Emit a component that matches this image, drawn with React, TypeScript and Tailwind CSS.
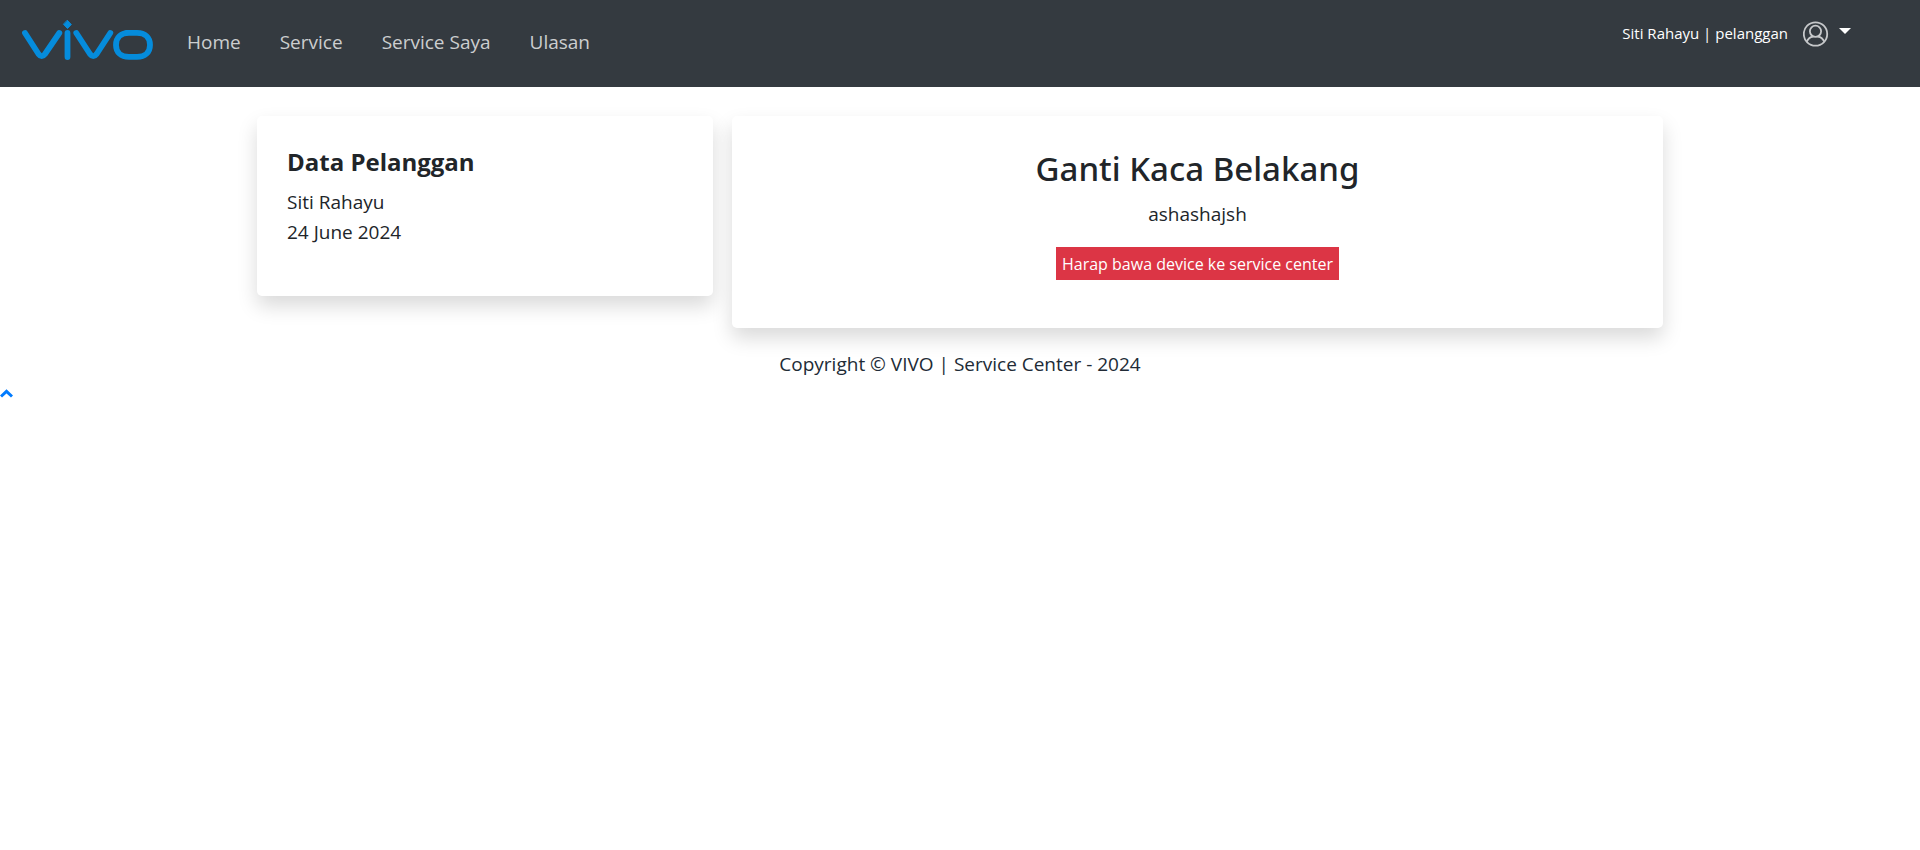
import React from "react";

const links = ["Home", "Service", "Service Saya", "Ulasan"];

function Logo() {
  return (
    <svg
      className="h-[42px] w-[132px]"
      viewBox="0 0 132 42"
      fill="none"
      stroke="#058cdc"
      strokeLinecap="round"
      strokeLinejoin="round"
      aria-label="vivo"
      role="img"
    >
      <g strokeWidth="5.8">
        <path d="M3 14 L16.500 35 Q19.700 39.400 23 35 L37.300 14" />
        <path d="M45.500 14 V38" />
        <path d="M54.300 14 L68 35 Q71.300 39.400 74.600 35 L88.300 14" />
        <path d="M104 13.900 H115 C123 13.900 128 18.500 128 25.900 C128 33.300 123 37.900 115 37.900 H107 C99 37.900 94 33.300 94 25.900 C94 18.500 99 13.900 107 13.900 Z" />
      </g>
      <path d="M45.500 1.500 L49.300 5.500 L45.500 9.500 L41.700 5.500 Z" fill="#058cdc" strokeWidth="1" />
    </svg>
  );
}

function UserIcon() {
  return (
    <svg className="size-[26px]" viewBox="0 0 26 26" fill="none" stroke="#c6c8ca" strokeWidth="1.800" aria-hidden="true">
      <circle cx="12.500" cy="13" r="11.700" />
      <circle cx="12.500" cy="10.300" r="5.600" />
      <path d="M3.800 20.800 C5 17.500 8 15.900 10.100 15.500 M14.900 15.500 C17 15.900 20 17.500 21.200 20.800" />
    </svg>
  );
}

export default function App() {
  return (
    <div className="bg-white font-['Open_Sans','Noto_Sans',sans-serif] text-[19px] leading-[30px] text-[#212529]">
      <nav className="flex h-[87px] items-start justify-between bg-[#343a40] pr-[69px] pl-[22px]">
        <div className="flex items-start">
          <a href="#" className="pt-[19px]">
            <Logo />
          </a>
          <ul className="flex gap-[39px] pt-[27px] pl-[33px]">
            {links.map((label) => (
              <li key={label}>
                <a href="#" className="text-[#cccecf]">
                  {label}
                </a>
              </li>
            ))}
          </ul>
        </div>
        <button type="button" className="flex items-start pt-[21px] text-[15px] leading-6 text-white">
          <span>Siti Rahayu | pelanggan</span>
          <span className="pl-[15px]">
            <UserIcon />
          </span>
          <svg className="mt-[7px] ml-[10px] h-[6px] w-[12px]" viewBox="0 0 12 6" fill="white" aria-hidden="true">
            <path d="M0 0 H12 L6 6 Z" />
          </svg>
        </button>
      </nav>

      <main className="mx-auto grid max-w-[1406px] grid-cols-3 items-start gap-[19px] pt-[29px]">
        <section className="rounded-[5px] bg-white px-[30px] pt-[31px] pb-[49px] shadow-[0_10px_20px_rgba(0,0,0,0.15)]">
          <h2 className="mb-[10px] text-2xl leading-[30px] font-bold">Data Pelanggan</h2>
          <p>Siti Rahayu</p>
          <p>24 June 2024</p>
        </section>
        <section className="col-span-2 flex flex-col items-center rounded-[5px] bg-white px-[30px] pt-[31px] pb-12 shadow-[0_10px_20px_rgba(0,0,0,0.15)]">
          <h1 className="mb-[8px] font-['Noto_Sans',sans-serif] text-[33px] leading-[44px] font-medium">
            Ganti Kaca Belakang
          </h1>
          <p className="mb-[18px]">ashashajsh</p>
          <p className="bg-[#dc3545] px-[6px] pt-[2px] text-base leading-[31px] text-white">
            Harap bawa device ke service center
          </p>
        </section>
      </main>

      <footer className="pt-[21px] text-center text-[#212b36]">Copyright © VIVO | Service Center - 2024</footer>
      <a href="#" aria-label="Kembali ke atas" className="flex h-[30px] w-[13px] items-center">
        <svg className="h-[10px] w-[13px]" viewBox="0 0 13 10" fill="none" stroke="#007bff" strokeWidth="3" aria-hidden="true">
          <path d="M1 7.500 L6.500 2.300 L12 7.500" />
        </svg>
      </a>
    </div>
  );
}
